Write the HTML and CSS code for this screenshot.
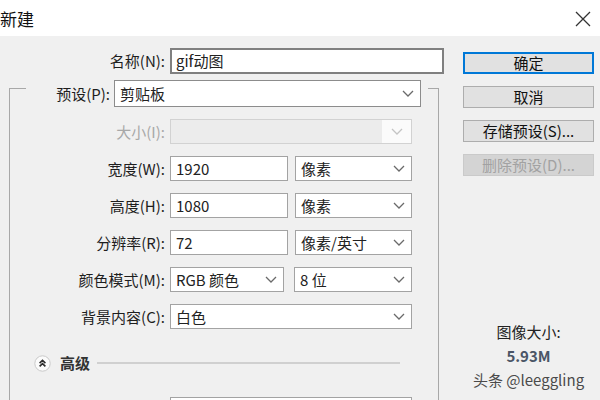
FILE: index.html
```html
<!DOCTYPE html>
<html lang="zh-CN">
<head>
<meta charset="utf-8">
<title>新建</title>
<link rel="stylesheet" href="styles.css">
</head>
<body>
<div class="dialog">
  <div class="titlebar">
    <span class="title">新建</span>
    <svg class="close" width="16" height="16" viewBox="0 0 16 16"><path d="M1 1 L15 15 M15 1 L1 15" stroke="#333" stroke-width="1.3" fill="none"/></svg>
  </div>
  <div class="main">
    <div class="form">
      <div class="row name-row">
        <span class="lbl name-lbl">名称(N):</span>
        <div class="field name-input">gif动图</div>
      </div>
      <div class="group">
        <div class="preset-row">
          <span class="lbl">预设(P):</span>
          <div class="field select preset-select"><span>剪贴板</span><svg class="chev" width="12" height="7" viewBox="0 0 12 7"><path d="M1 1 L6 6 L11 1" stroke="#6a6a6a" stroke-width="1.3" fill="none"/></svg></div>
        </div>
        <div class="rows">
          <div class="row">
            <span class="lbl disabled-lbl">大小(I):</span>
            <div class="field select wide disabled"><span></span><span class="arrow-area"><svg class="chev" width="12" height="7" viewBox="0 0 12 7"><path d="M1 1 L6 6 L11 1" stroke="#c4c4c4" stroke-width="1.3" fill="none"/></svg></span></div>
          </div>
          <div class="row">
            <span class="lbl">宽度(W):</span>
            <div class="field num">1920</div>
            <div class="field select unit"><span>像素</span><svg class="chev" width="12" height="7" viewBox="0 0 12 7"><path d="M1 1 L6 6 L11 1" stroke="#6a6a6a" stroke-width="1.3" fill="none"/></svg></div>
          </div>
          <div class="row">
            <span class="lbl">高度(H):</span>
            <div class="field num">1080</div>
            <div class="field select unit"><span>像素</span><svg class="chev" width="12" height="7" viewBox="0 0 12 7"><path d="M1 1 L6 6 L11 1" stroke="#6a6a6a" stroke-width="1.3" fill="none"/></svg></div>
          </div>
          <div class="row">
            <span class="lbl">分辨率(R):</span>
            <div class="field num">72</div>
            <div class="field select unit"><span>像素/英寸</span><svg class="chev" width="12" height="7" viewBox="0 0 12 7"><path d="M1 1 L6 6 L11 1" stroke="#6a6a6a" stroke-width="1.3" fill="none"/></svg></div>
          </div>
          <div class="row">
            <span class="lbl">颜色模式(M):</span>
            <div class="field select mode"><span>RGB 颜色</span><svg class="chev" width="12" height="7" viewBox="0 0 12 7"><path d="M1 1 L6 6 L11 1" stroke="#6a6a6a" stroke-width="1.3" fill="none"/></svg></div>
            <div class="field select bits"><span>8 位</span><svg class="chev" width="12" height="7" viewBox="0 0 12 7"><path d="M1 1 L6 6 L11 1" stroke="#6a6a6a" stroke-width="1.3" fill="none"/></svg></div>
          </div>
          <div class="row">
            <span class="lbl">背景内容(C):</span>
            <div class="field select wide"><span>白色</span><svg class="chev" width="12" height="7" viewBox="0 0 12 7"><path d="M1 1 L6 6 L11 1" stroke="#6a6a6a" stroke-width="1.3" fill="none"/></svg></div>
          </div>
        </div>
        <div class="advanced">
          <svg class="adv-icon" width="17" height="17" viewBox="0 0 17 17"><circle cx="8.5" cy="8.5" r="7.7" fill="#fbfbfb" stroke="#c9c9c9" stroke-width="1"/><path d="M5.6 8.2 L8.5 5.4 L11.4 8.2 M5.6 11.4 L8.5 8.6 L11.4 11.4" stroke="#2a2a2a" stroke-width="1.6" fill="none"/></svg>
          <span class="adv-text">高级</span>
          <span class="adv-line"></span>
        </div>
        <div class="field bottom-box"></div>
      </div>
    </div>
    <div class="side">
      <div class="btn primary">确定</div>
      <div class="btn">取消</div>
      <div class="btn">存储预设(S)...</div>
      <div class="btn off">删除预设(D)...</div>
      <div class="info">
        <div class="info-label">图像大小:</div>
        <div class="info-value">5.93M</div>
        <div class="watermark">头条 @leeggling</div>
      </div>
    </div>
  </div>
</div>
</body>
</html>
```

FILE: styles.css
```css
* { box-sizing: border-box; }
html, body {
  margin: 0;
  padding: 0;
}
body {
  width: 600px;
  height: 400px;
  overflow: hidden;
  background: #f0f0f0;
  font-family: "Noto Sans CJK SC", "Noto Sans", sans-serif;
  font-size: 15px;
  color: #1e1e1e;
}
.dialog {
  width: 600px;
  height: 400px;
  display: flex;
  flex-direction: column;
  overflow: hidden;
}
.titlebar {
  flex: none;
  height: 36px;
  background: #ffffff;
  display: flex;
  align-items: center;
  justify-content: space-between;
  padding-right: 9px;
  padding-top: 1px;
}
.title {
  margin-left: 0;
  font-size: 17px;
  line-height: 20px;
  color: #111;
}
.close { display: block; }
.main {
  display: flex;
  flex: 1;
  min-height: 0;
}
.form {
  flex: none;
  width: 445px;
  padding-top: 12px;
}
.row {
  display: flex;
  align-items: center;
  height: 25px;
}
.lbl {
  line-height: 20px;
  white-space: nowrap;
}
.row .lbl {
  width: 155px;
  text-align: right;
  margin-right: 5px;
  flex: none;
}
.name-row { height: 26px; }
.row .name-lbl { width: 165px; }
.field {
  flex: none;
  background: #ffffff;
  border: 1px solid #a3a3a3;
  height: 25px;
  display: flex;
  align-items: center;
  padding-left: 5px;
  line-height: 20px;
  color: #222;
  white-space: nowrap;
}
.name-input {
  width: 274px;
  height: 26px;
  border: 2px solid #808080;
  padding-left: 4px;
}
.select {
  justify-content: space-between;
  padding-right: 6px;
}
.chev { display: block; flex: none; }
.group {
  margin-top: 14px;
  margin-left: 9px;
  width: 430px;
  height: 330px;
  border: 1px solid #a8a8a8;
  border-bottom: none;
}
.preset-row {
  margin-top: -9px;
  margin-left: 16px;
  width: 402px;
  height: 27px;
  background: #f0f0f0;
  display: flex;
  align-items: center;
}
.preset-row .lbl {
  width: 84px;
  text-align: right;
  margin-right: 4px;
  flex: none;
}
.preset-select {
  width: 307px;
  height: 27px;
  border-color: #8c8c8c;
}
.rows {
  margin-top: 12px;
  display: flex;
  flex-direction: column;
  gap: 12px;
}
.wide { width: 242px; }
.num { width: 118px; }
.unit { width: 117px; margin-left: 7px; }
.mode { width: 114px; }
.bits { width: 118px; margin-left: 10px; }
.disabled-lbl { color: #a8a8a8; }
.disabled {
  background: #ececec;
  border-color: #d2d2d2;
  padding-right: 0;
}
.arrow-area {
  width: 29px;
  height: 100%;
  background: #fbfbfb;
  display: flex;
  align-items: center;
  justify-content: center;
}
.advanced {
  margin-top: 25px;
  height: 18px;
  display: flex;
  align-items: center;
  padding-left: 24px;
  margin-right: 38px;
}
.adv-icon { display: block; flex: none; }
.adv-text {
  margin-left: 9px;
  font-size: 15px;
  font-weight: bold;
  color: #333;
  line-height: 18px;
}
.adv-line {
  flex: 1;
  height: 2px;
  background: #d0d0d0;
  margin-left: 7px;
}
.bottom-box {
  margin-top: 25px;
  margin-left: 160px;
  width: 242px;
  height: 30px;
}
.side {
  flex: none;
  margin-left: 18px;
  width: 131px;
  padding-top: 16px;
  display: flex;
  flex-direction: column;
  gap: 12px;
}
.btn {
  flex: none;
  height: 22px;
  background: #e1e1e1;
  border: 1px solid #adadad;
  display: flex;
  align-items: center;
  justify-content: center;
  line-height: 18px;
  color: #111;
  white-space: nowrap;
}
.btn.primary { border: 2px solid #0078d7; }
.btn.off {
  background: #d4d4d4;
  border-color: #cacaca;
  color: #a2a2a2;
}
.info {
  margin-top: 132px;
  text-align: center;
}
.info-label, .info-value, .watermark {
  line-height: 24px;
  white-space: nowrap;
}
.info-label { font-size: 15px; color: #222; }
.info-value { font-size: 15px; color: #4a5566; font-weight: bold; }
.watermark {
  font-size: 15px;
  color: #4a4a4a;
  margin-left: -12px;
  margin-right: -12px;
}
```
